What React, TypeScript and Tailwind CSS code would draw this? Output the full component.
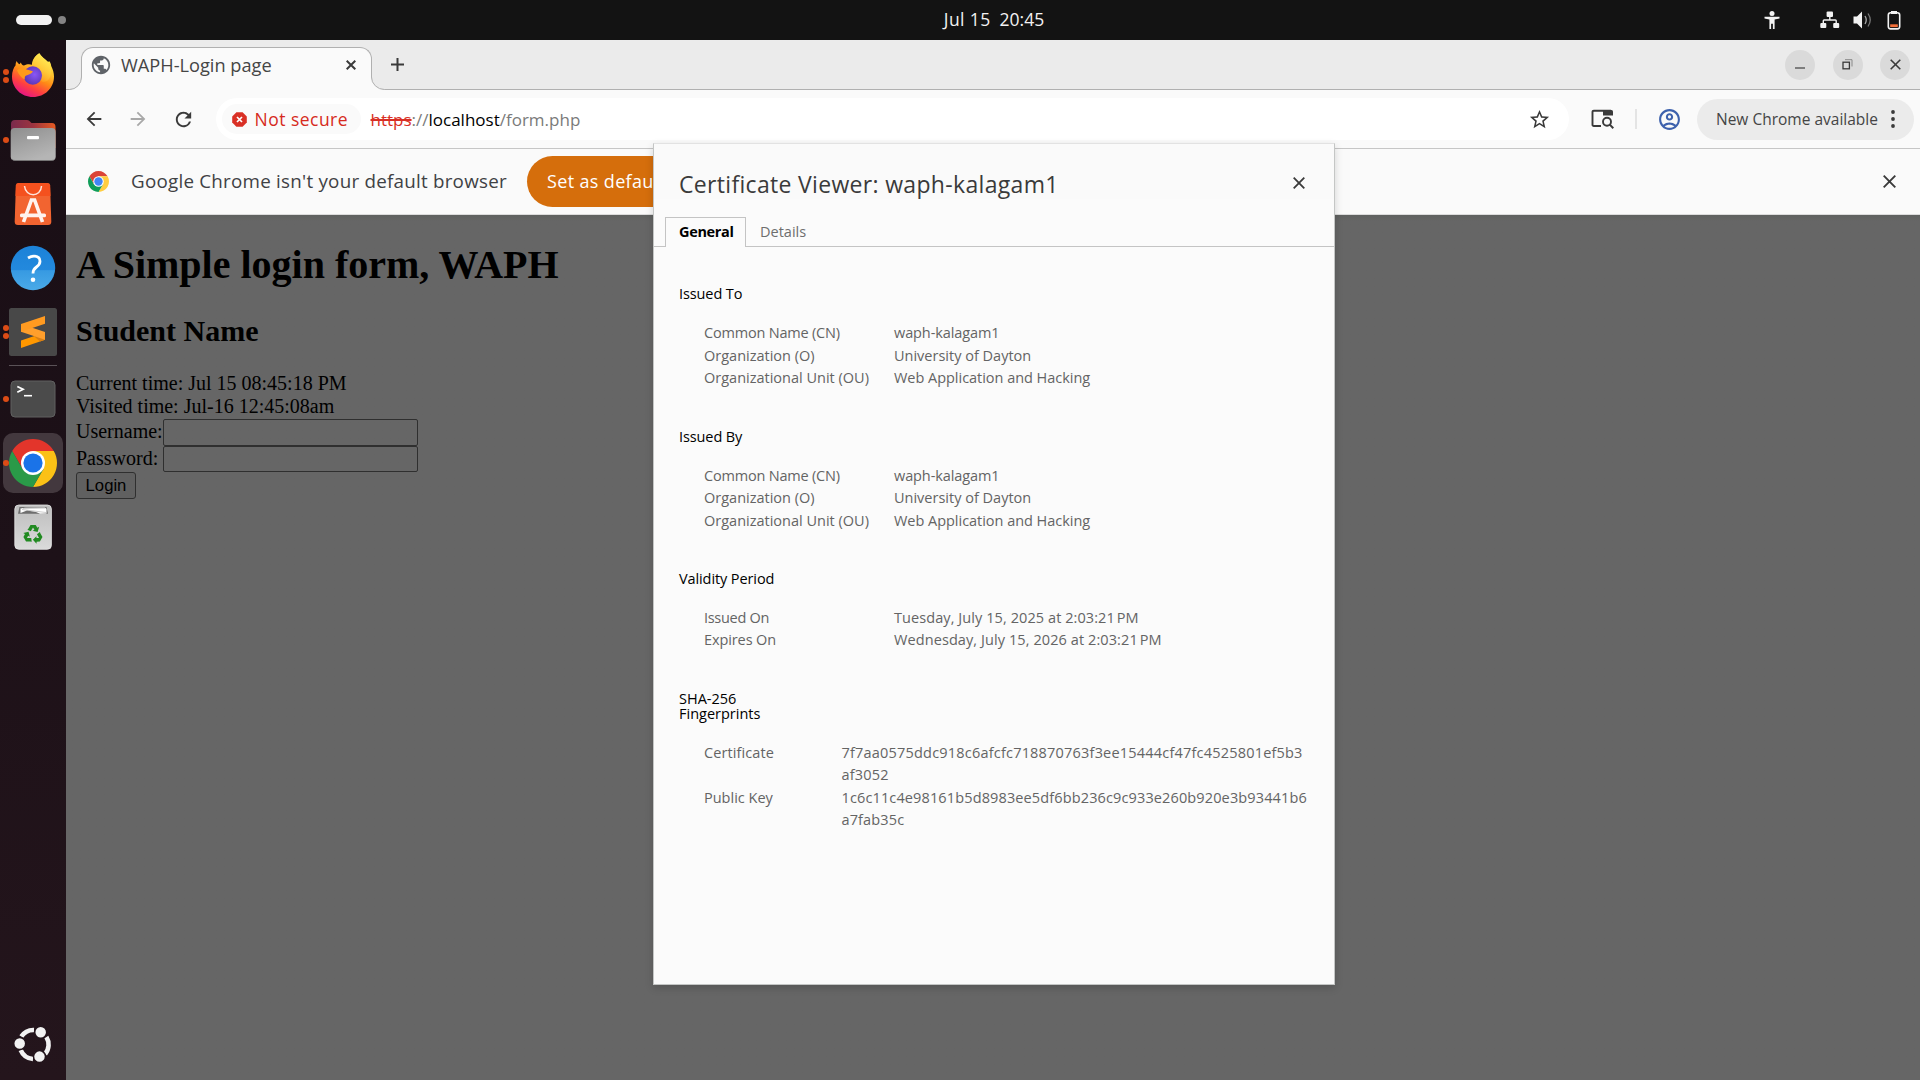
import type { ReactNode } from "react";
import {
  MdArrowBack,
  MdArrowForward,
  MdOutlineAccountCircle,
  MdPublic,
  MdRefresh,
  MdStarBorder,
} from "react-icons/md";

type Row = { label: string; value: string; labelClass?: string; valueClass?: string };

const subject: Row[] = [
  { label: "Common Name (CN)", value: "waph-kalagam1", labelClass: "tracking-[-0.2px]", valueClass: "tracking-[-0.1px]" },
  { label: "Organization (O)", value: "University of Dayton" },
  { label: "Organizational Unit (OU)", value: "Web Application and Hacking", valueClass: "tracking-[-0.03px]" },
];

const validity: Row[] = [
  { label: "Issued On", value: "Tuesday, July 15, 2025 at 2:03:21\u202fPM", labelClass: "tracking-[-0.3px]", valueClass: "tracking-[0.08px]" },
  { label: "Expires On", value: "Wednesday, July 15, 2026 at 2:03:21\u202fPM", labelClass: "tracking-[-0.1px]", valueClass: "tracking-[0.09px]" },
];

function Cross({ size, width = 2 }: { size: number; width?: number }) {
  return (
    <svg width={size} height={size} viewBox={`0 0 ${size} ${size}`} fill="none" stroke="#3a3a3a" strokeWidth={width}>
      <path d={`M0.7 0.7 L${size - 0.7} ${size - 0.7} M${size - 0.7} 0.7 L0.7 ${size - 0.7}`} />
    </svg>
  );
}

function ChromeLogo({ size, dim }: { size: number; dim?: boolean }) {
  const red = dim ? "#db4437" : "#e3352b";
  const green = dim ? "#0f9d58" : "#2a9a48";
  const yellow = dim ? "#ffcd40" : "#fbc116";
  const blue = dim ? "#4285f4" : "#1a73e8";
  return (
    <svg width={size} height={size} viewBox="0 0 48 48">
      <path d="M24 12 H44.78 A24 24 0 0 0 3.22 12 L13.61 30 L24 24 Z" fill={red} />
      <path d="M34.39 30 L24 48 A24 24 0 0 0 44.78 12 H24 L24 24 Z" fill={yellow} />
      <path d="M13.61 30 L3.22 12 A24 24 0 0 0 24 48 L34.39 30 L24 24 Z" fill={green} />
      <circle cx="24" cy="24" r="12" fill="#fff" />
      <circle cx="24" cy="24" r="9.6" fill={blue} />
    </svg>
  );
}

function Firefox() {
  return (
    <svg width="66" height="64" viewBox="0 0 66 64">
      <defs>
        <linearGradient id="ff" x1="0.78" y1="0.05" x2="0.3" y2="1">
          <stop offset="0" stopColor="#fff44f" />
          <stop offset="0.3" stopColor="#ffc22e" />
          <stop offset="0.52" stopColor="#ff8a16" />
          <stop offset="0.75" stopColor="#ff4040" />
          <stop offset="1" stopColor="#e3128a" />
        </linearGradient>
        <radialGradient id="orb" cx="0.6" cy="0.45" r="0.6">
          <stop offset="0" stopColor="#8a56f6" />
          <stop offset="1" stopColor="#5a35b4" />
        </radialGradient>
        <linearGradient id="ffl" x1="0.8" y1="0" x2="0.3" y2="1">
          <stop offset="0" stopColor="#fff25a" />
          <stop offset="1" stopColor="#ffb02a" stopOpacity="0.3" />
        </linearGradient>
      </defs>
      <path
        d="M39.3 9.3 C41 12.5 45 15 48 18 C48.6 17.8 49 17.5 49 17 C50.4 18.4 51 20 51.2 22 C53 25.5 54 29 54 32.5 C54 44 44.8 53 33 53 C21.2 53 12 44 12 32.5 C12 27.5 13.6 23.5 15.6 21.2 C15.5 19.6 16 18.2 16.7 17 C17.2 18.6 18.4 19.8 19.6 20.3 L20.8 18.4 C21.3 20 22.3 21 24 21.5 C26.8 19.9 29.8 19.9 32 20.7 C31.8 16.6 35.2 11.6 39.3 9.3 Z"
        fill="url(#ff)"
      />
      <circle cx="32.8" cy="31.5" r="9.3" fill="url(#orb)" />
      <path d="M39.3 9.3 C41 12.5 45 15 48 18 C51 22 52 28 50 33 C48 38 43 39 40.5 36.5 C43.5 31 41.5 25.5 36.5 22.6 C32.5 21.5 31.3 13.8 39.3 9.3 Z" fill="url(#ffl)" />
      <path d="M17 26.5 C19.5 23.8 23.5 24 26 25.2 C28.5 26.2 30.5 26 33 27.4 C31.5 30 28.5 30.2 27 31.2 C25 31.6 24.5 33 24.8 35.5 C22 34.5 19 31 17 26.5 Z" fill="#ff9a1a" />
    </svg>
  );
}

function Files() {
  return (
    <svg width="66" height="64" viewBox="0 0 66 64">
      <defs>
        <linearGradient id="fb" x1="0" x2="1">
          <stop offset="0" stopColor="#7a2a4d" />
          <stop offset="0.5" stopColor="#9c3440" />
          <stop offset="1" stopColor="#e65a22" />
        </linearGradient>
        <linearGradient id="fg" x1="0" y1="0" x2="0.5" y2="1">
          <stop offset="0" stopColor="#8e8e8e" />
          <stop offset="1" stopColor="#b5b5b5" />
        </linearGradient>
      </defs>
      <path d="M11 40 V16 Q11 12 15 12 H27 Q29 12 30 13.5 L31.5 15 H52 Q55.5 15 55.5 19 V40 Z" fill="url(#fb)" />
      <rect x="10.7" y="20" width="45" height="32.5" rx="4" fill="url(#fg)" />
      <path d="M12 51 Q13 52.5 15 52.5 H51.5 Q54 52.5 55 51" fill="none" stroke="#787878" strokeWidth="0.8" />
      <rect x="27" y="28" width="12" height="3.2" rx="1" fill="#fff" />
    </svg>
  );
}

function AppCenter() {
  return (
    <svg width="66" height="64" viewBox="0 0 66 64">
      <path d="M18.5 11 H47.5 Q50 11 50.1 13.5 L51.3 49.5 Q51.4 53 48 53 H18 Q14.6 53 14.7 49.5 L15.9 13.5 Q16 11 18.5 11 Z" fill="#f26430" />
      <path d="M18.5 11 H47.5 Q50 11 50.1 13.5 L50.5 24 H15.5 L15.9 13.5 Q16 11 18.5 11 Z" fill="#f4511e" />
      <path d="M24.5 14 C25.5 25.5 41 25.5 41.5 14" fill="none" stroke="#fde4da" strokeWidth="1.5" />
      <path d="M23.5 50 L31.4 28 H34.6 L42.5 50" fill="none" stroke="#fff3ee" strokeWidth="3.6" />
      <rect x="20" y="41.6" width="26" height="3.6" rx="1.5" fill="#fff3ee" />
    </svg>
  );
}

function Help() {
  return (
    <svg width="66" height="64" viewBox="0 0 66 64">
      <defs>
        <linearGradient id="hp" x1="0" y1="0" x2="0" y2="1">
          <stop offset="0" stopColor="#1c82d8" />
          <stop offset="0.54" stopColor="#2389dd" />
          <stop offset="0.56" stopColor="#379ae2" />
          <stop offset="1" stopColor="#4aaae8" />
        </linearGradient>
      </defs>
      <circle cx="33" cy="32" r="22.2" fill="url(#hp)" />
      <path d="M28 22 Q31 20.2 34 20.2 Q40 20.2 40 25.3 Q40 28.5 36.5 31 Q33 33.500 33 37.5" fill="none" stroke="#fff" strokeWidth="2.8" />
      <circle cx="33" cy="43.8" r="2.3" fill="#fff" />
    </svg>
  );
}

function Sublime() {
  return (
    <svg width="66" height="64" viewBox="0 0 66 64">
      <rect x="9" y="8" width="48" height="48" rx="2.5" fill="#484848" />
      <path d="M21 40.500 L45 32.5 V39.7 L21 48 Z" fill="#ff9800" />
      <path d="M34 36.200 L45 32.5 V39.7 L40 41.4 Z" fill="#d98016" />
      <path d="M21 24 L45 32 V39.7 L21 31.8 Z" fill="#ff9f2c" />
      <path d="M21 24 L45 16 V23.8 L21 31.8 Z" fill="#ff9a20" />
    </svg>
  );
}

function Terminal() {
  return (
    <svg width="66" height="64" viewBox="0 0 66 64">
      <rect x="11" y="14" width="44" height="36" rx="4" fill="#4b4b4b" stroke="#606060" strokeWidth="1" />
      <path d="M17.3 19.5 L23 22.3 L17.3 25.2" fill="none" stroke="#fff" strokeWidth="1.8" />
      <path d="M24 28.7 H32" stroke="#fff" strokeWidth="1.6" />
    </svg>
  );
}

function Trash() {
  return (
    <svg width="66" height="64" viewBox="0 0 66 64">
      <defs>
        <linearGradient id="tr" x1="0" y1="0" x2="0" y2="1">
          <stop offset="0" stopColor="#bdbdbd" />
          <stop offset="1" stopColor="#dadada" />
        </linearGradient>
      </defs>
      <rect x="14.8" y="10" width="36.6" height="44.3" rx="4" fill="url(#tr)" stroke="#e8e8e8" strokeWidth="0.8" />
      <path d="M18 18.8 L19.5 12 H46.5 L48 18.8 Z" fill="#6e6e6e" />
      <path d="M20.5 18 V13.5 L25 12.8 L45 12.5 L46.5 14 V18.5 L40 18.8 L36 17 L27 15.5 Z" fill="#fff" />
      <path d="M22 14.5 L46 17.5 M23 13.5 L45 13" stroke="#a8a8a8" strokeWidth="0.6" />
      <g fill="#218a21">
        {[0, 120, 240].map((a) => (
          <g key={a} transform={`rotate(${a} 33 39.5)`}>
            <path d="M28.5 33.5 L30.5 30 H35.7 L37.4 32.8 L39.2 31.8 L37.6 37 L32.7 35.7 L34.4 34.7 L33 32.5 L30.8 36.2 L27.4 34.8 Z" />
          </g>
        ))}
      </g>
    </svg>
  );
}

function UbuntuLogo() {
  return (
    <svg width="66" height="64" viewBox="0 0 66 64">
      <g fill="none" stroke="#f2f2f2" strokeWidth="4.6">
        <path d="M21.3 24.6 A14.5 14.5 0 0 1 34 18" />
        <path d="M46.4 25 A14.5 14.5 0 0 1 45.2 42" />
        <path d="M33 47 A14.5 14.5 0 0 1 20.7 38.2" />
      </g>
      <g fill="#f2f2f2" stroke="#22141b" strokeWidth="1.5">
        <circle cx="40.7" cy="20.3" r="6" />
        <circle cx="19.7" cy="31.5" r="6" />
        <circle cx="39.5" cy="44.6" r="6" />
      </g>
    </svg>
  );
}

function DockItem({ dots = 0, active, children }: { dots?: number; active?: boolean; children: ReactNode }) {
  return (
    <div className="relative flex h-16 w-[66px] items-center justify-center">
      {active && <div className="absolute inset-x-[3px] inset-y-[2px] rounded-[10px] bg-[#43383e]" />}
      <div className="relative">{children}</div>
      <div className="absolute inset-y-0 left-[3px] flex flex-col justify-center gap-[2.5px]">
        {Array.from({ length: dots }, (_, i) => (
          <span key={i} className="size-[5.6px] rounded-full bg-[#dc4c16]" />
        ))}
      </div>
    </div>
  );
}

function Dock() {
  return (
    <aside className="flex h-[1040px] w-[66px] shrink-0 flex-col bg-linear-to-b from-[#190e15] via-[#1d1118] to-[#24151c] pt-1">
      <DockItem dots={2}><Firefox /></DockItem>
      <DockItem dots={1}><Files /></DockItem>
      <DockItem><AppCenter /></DockItem>
      <DockItem><Help /></DockItem>
      <DockItem dots={2}><Sublime /></DockItem>
      <div className="mx-[9px] my-px h-px shrink-0 bg-[#5a5257]" />
      <DockItem dots={1}><Terminal /></DockItem>
      <DockItem dots={1} active><ChromeLogo size={48} /></DockItem>
      <DockItem><Trash /></DockItem>
      <div className="mt-auto mb-1 h-16"><UbuntuLogo /></div>
    </aside>
  );
}

function TopBar() {
  return (
    <header className="grid h-10 grid-cols-3 items-center bg-[#131313] text-[17.5px] text-[#f2f2f2]">
      <div className="flex items-center gap-1.5 pl-4">
        <span className="h-2.5 w-9 rounded-full bg-[#f2f2f2]" />
        <span className="size-2 rounded-full bg-[#848484]" />
      </div>
      <div className="flex justify-center gap-[9px] pb-px pl-[68px] whitespace-pre">
        <span className="tracking-[0.4px]">Jul 15</span>
        <span>20:45</span>
      </div>
      <div className="flex items-center justify-end pr-[19px]">
        <svg width="16" height="18" viewBox="0 0 16 18" fill="#f2f2f2">
          <circle cx="8" cy="2.5" r="2.5" />
          <path d="M0.5 5.7 H15.5 V7.6 L10.6 8.5 V18 H8.9 V12.8 H7.1 V18 H5.4 V8.5 L0.5 7.6 Z" />
        </svg>
        <svg className="ml-10" width="20" height="18" viewBox="0 0 20 18" fill="#f2f2f2">
          <rect x="6.6" y="0.5" width="6.4" height="5.5" rx="1" />
          <rect x="0.3" y="12" width="6" height="5" rx="1" />
          <rect x="13.2" y="12" width="6" height="5" rx="1" />
          <path d="M9.8 5 V9 M3.3 12.5 V9.8 Q3.3 9 4.1 9 H15.4 Q16.2 9 16.2 9.8 V12.5" fill="none" stroke="#f2f2f2" strokeWidth="1.4" />
        </svg>
        <svg className="ml-[13px]" width="20" height="18" viewBox="0 0 20 18">
          <path d="M0.5 5.5 H4 L9 0.5 V17.5 L4 12.5 H0.5 Z" fill="#f2f2f2" />
          <path d="M12 5 Q14.5 9 12 13" fill="none" stroke="#a8a8a8" strokeWidth="1.3" />
          <path d="M15 2.5 Q19.5 9 15 15.5" fill="none" stroke="#777" strokeWidth="1.3" />
        </svg>
        <svg className="ml-[14px]" width="14" height="19" viewBox="0 0 14 19">
          <rect x="4" y="0" width="6" height="3" fill="#f2f2f2" />
          <rect x="1.3" y="1.7" width="11.4" height="16.2" rx="2.3" fill="none" stroke="#f2f2f2" strokeWidth="1.6" />
          <rect x="3.2" y="13.3" width="7.6" height="2.8" fill="#f4703a" />
        </svg>
      </div>
    </header>
  );
}

function WindowButton({ children }: { children: ReactNode }) {
  return <button className="flex size-[30px] items-center justify-center rounded-full bg-[#dadada]">{children}</button>;
}

function TabStrip() {
  return (
    <div className="relative flex h-[50px] items-center border-b border-[#b0b0b0] bg-[#ebebeb]">
      <div className="relative z-10 mt-[7px] -mb-px ml-[15px] flex h-[43px] w-[291px] items-center self-end rounded-t-[12px] border border-b-0 border-[#b0b0b0] bg-[#fafafa] pr-[15px] pb-[9px] pl-[8px]">
        <MdPublic className="size-[22px] shrink-0 text-[#5f6368]" />
        <span className="ml-[9px] flex-1 text-[18.2px] leading-6 whitespace-nowrap text-[#454545]">WAPH-Login page</span>
        <Cross size={10} />
        <svg className="absolute bottom-0 -left-[16px]" width="16" height="14" viewBox="0 0 16 14">
          <path d="M0 14 V13.5 H3.5 A12 12.5 0 0 0 15.5 1 V0 H16 V14 Z" fill="#fafafa" />
          <path d="M0 13.5 H3.5 A12 12.5 0 0 0 15.5 1 V0" fill="none" stroke="#b0b0b0" />
        </svg>
        <svg className="absolute -right-[14px] bottom-0" width="14" height="14" viewBox="0 0 14 14">
          <path d="M0 14 V0 H0.5 V1 A13 12.5 0 0 0 13.5 13.5 H14 V14 Z" fill="#fafafa" />
          <path d="M0.5 0 V1 A13 12.5 0 0 0 13.5 13.5 H14" fill="none" stroke="#b0b0b0" />
        </svg>
      </div>
      <svg className="ml-[18.5px]" width="13" height="13" viewBox="0 0 13 13" stroke="#3a3a3a" strokeWidth="2">
        <path d="M6.5 0 V13 M0 6.5 H13" />
      </svg>
      <div className="mr-[10px] ml-auto flex items-center gap-[17.5px]">
        <WindowButton>
          <svg width="10" height="10" viewBox="0 0 10 10"><path d="M0 8 H10" stroke="#555" strokeWidth="1.4" /></svg>
        </WindowButton>
        <WindowButton>
          <svg width="11" height="11" viewBox="0 0 11 11" fill="none">
            <path d="M3 0.7 H10 V7.5" stroke="#888" />
            <rect x="1" y="3.2" width="6.4" height="6.6" stroke="#3a3a3a" strokeWidth="1.3" />
          </svg>
        </WindowButton>
        <WindowButton><Cross size={11} width={1.6} /></WindowButton>
      </div>
    </div>
  );
}

function Toolbar() {
  return (
    <div className="flex h-[59px] items-center border-b border-[#c6c6c6] bg-[#fafafa] text-[17px]">
      <MdArrowBack className="ml-[16.5px] size-[22px] text-[#3a3a3a]" />
      <MdArrowForward className="ml-[22.5px] size-[22px] text-[#a8a8a8]" />
      <MdRefresh className="ml-[22.5px] size-[23px] text-[#3a3a3a]" />
      <div className="ml-[21.5px] flex h-[42px] w-[1353px] items-center rounded-full bg-white pr-[18px] pl-1.5">
        <div className="flex h-[30px] w-[139px] items-center rounded-full bg-[#fafafa] pl-[10px]">
          <svg width="15" height="15" viewBox="0 0 15 15">
            <path d="M4.4 0.2 H10.6 L14.8 4.4 V10.6 L10.6 14.8 H4.4 L0.2 10.6 V4.4 Z" fill="#d93025" />
            <path d="M5 5 L10 10 M10 5 L5 10" stroke="#fff" strokeWidth="1.7" />
          </svg>
          <span className="ml-[7.5px] text-[17.5px] font-medium tracking-[0.48px] whitespace-nowrap text-[#d62a20]">Not secure</span>
        </div>
        <div className="ml-[9.5px] flex pt-px whitespace-nowrap text-[#7a7a7a]">
          <span className="text-[#d93025] line-through decoration-2">https</span>
          <span>://</span>
          <span className="text-black">localhost</span>
          <span>/form.php</span>
        </div>
        <MdStarBorder className="ml-auto size-[23px] text-[#3a3a3a]" />
      </div>
      <svg className="ml-[22px]" width="23" height="20" viewBox="0 0 23 20" fill="none">
        <path d="M10 17 H2.8 Q1.5 17 1.5 15.7 V3 Q1.5 1.7 2.8 1.7 H20" stroke="#3a3a3a" strokeWidth="1.9" />
        <path d="M12 1 H20.5 Q22 1 22 2.5 V6.5 H12 Z" fill="#3a3a3a" />
        <circle cx="16" cy="12.8" r="4" stroke="#3a3a3a" strokeWidth="1.9" />
        <path d="M18.8 15.6 L22.3 19.2" stroke="#3a3a3a" strokeWidth="2" />
      </svg>
      <div className="ml-[21px] h-5 w-0.5 bg-[#e4e4e4]" />
      <MdOutlineAccountCircle className="ml-[20px] size-[25px] text-[#3d61ad]" />
      <div className="mr-[6px] ml-auto flex h-[41px] w-[217px] items-center rounded-full bg-[#ebebeb] pr-[19px] pl-[19px]">
        <span className="pt-0.5 text-[15.5px] whitespace-nowrap text-[#454545]">New Chrome available</span>
        <svg className="ml-auto shrink-0" width="4" height="18" viewBox="0 0 4 18" fill="#3a3a3a">
          <circle cx="2" cy="2" r="1.9" /><circle cx="2" cy="9" r="1.9" /><circle cx="2" cy="16" r="1.9" />
        </svg>
      </div>
    </div>
  );
}

function InfoBar() {
  return (
    <div className="flex h-[66px] items-center border-b border-[#dcdcdc] bg-[#fafafa]">
      <div className="ml-[22px]"><ChromeLogo size={21} dim /></div>
      <span className="ml-[22px] w-[396px] text-[18.8px] tracking-[0.24px] whitespace-nowrap text-[#3f4144]">
        Google Chrome isn't your default browser
      </span>
      <button className="-mt-px flex h-[51px] w-[170px] items-center rounded-full bg-[#d56e0c] pl-5 text-[18px] font-medium tracking-[0.35px] whitespace-nowrap text-white">
        Set as default
      </button>
      <div className="mr-[24px] ml-auto"><Cross size={13} width={1.9} /></div>
    </div>
  );
}

function LoginPage() {
  return (
    <main className="flex-1 bg-[#666] bg-linear-to-b from-[#5f6160] to-[#666] to-[6px] pl-[10px] font-['Liberation_Serif',serif] text-[20px] text-black">
      <h1 className="pt-[27px] text-[40px] leading-[46px] font-bold">A Simple login form, WAPH</h1>
      <h2 className="mt-[26px] text-[30px] leading-[34px] font-bold">Student Name</h2>
      <div className="mt-[24px] leading-[23px]">
        <div>Current time: Jul 15 08:45:18 PM</div>
        <div>Visited time: Jul-16 12:45:08am</div>
      </div>
      <form className="pt-px">
        <label className="flex h-[27px] items-center">
          <span className="w-[87px] pb-[3px]">Username:</span>
          <input className="h-[27px] w-[255px] rounded-[2px] border border-[#2f2f2f] bg-transparent" />
        </label>
        <label className="flex h-[26px] items-center">
          <span className="w-[87px] pb-[2px]">Password:</span>
          <input className="h-[26px] w-[255px] rounded-[2px] border border-[#2f2f2f] bg-transparent" />
        </label>
        <button type="button" className="flex h-[27px] w-[60px] items-center justify-center rounded-[3px] border border-[#2f2f2f] bg-[#606060] font-['Liberation_Sans',sans-serif] text-[16.67px]">
          Login
        </button>
      </form>
    </main>
  );
}

function Section({ title, rows }: { title: string; rows: Row[] }) {
  return (
    <section className="mb-[38.7px]">
      <h3 className="mb-[21.1px] text-[14.5px] leading-[15px] tracking-[-0.1px] text-black">{title}</h3>
      <dl className="pl-[25px] leading-[22.5px]">
        {rows.map((row) => (
          <div key={row.label} className="flex">
            <dt className={`w-[190px] shrink-0 ${row.labelClass ?? ""}`}>{row.label}</dt>
            <dd className={`whitespace-nowrap ${row.valueClass ?? ""}`}>{row.value}</dd>
          </div>
        ))}
      </dl>
    </section>
  );
}

function CertificateDialog() {
  return (
    <div role="dialog" className="absolute top-[143px] left-[653px] z-20 flex h-[842px] w-[682px] flex-col border border-[#c4c6c5] border-t-[#e2e2e2] bg-[#fbfbfb] shadow-[0_3px_8px_rgba(0,0,0,0.16)]">
      <div className="flex h-[55px] items-center justify-between bg-[#fafafa] pt-[25px] pr-[29px] pl-[25px]">
        <h2 className="text-[23px] leading-8 tracking-[0.32px] whitespace-nowrap text-[#3a3a3a]">Certificate Viewer: waph-kalagam1</h2>
        <div className="pb-[3px]"><Cross size={12} width={1.8} /></div>
      </div>
      <nav className="mt-[18px] flex h-[30px] text-[14.5px]">
        <div className="w-[11px] border-b border-[#c4c4c4]" />
        <div className="flex w-[81px] items-center border border-b-0 border-[#c4c4c4] pb-0.5 pl-[13px] font-bold tracking-[-0.34px] text-black">General</div>
        <div className="flex flex-1 items-center border-b border-[#c4c4c4] pl-[14px] text-[#6e6e6e]">Details</div>
      </nav>
      <div className="pt-[39.3px] pl-[25px] text-[14.5px] text-[#646464]">
        <Section title="Issued To" rows={subject} />
        <Section title="Issued By" rows={subject} />
        <Section title="Validity Period" rows={validity} />
        <section>
          <h3 className="mb-[20.6px] leading-[15.4px] text-black">SHA-256<br />Fingerprints</h3>
          <dl className="grid grid-cols-[137.5px_1fr] pl-[25px] leading-[22.4px] whitespace-nowrap">
            <dt className="tracking-[0.1px]">Certificate</dt>
            <dd className="tracking-[0.2px]">7f7aa0575ddc918c6afcfc718870763f3ee15444cf47fc4525801ef5b3<br />af3052</dd>
            <dt>Public Key</dt>
            <dd className="tracking-[0.13px]">1c6c11c4e98161b5d8983ee5df6bb236c9c933e260b920e3b93441b6<br />a7fab35c</dd>
          </dl>
        </section>
      </div>
    </div>
  );
}

export default function App() {
  return (
    <div className="relative h-[1080px] w-[1920px] overflow-hidden bg-[#131313] font-['Open_Sans',sans-serif]">
      <TopBar />
      <div className="flex">
        <Dock />
        <div className="flex h-[1040px] flex-1 flex-col">
          <TabStrip />
          <Toolbar />
          <InfoBar />
          <LoginPage />
        </div>
      </div>
      <CertificateDialog />
    </div>
  );
}
